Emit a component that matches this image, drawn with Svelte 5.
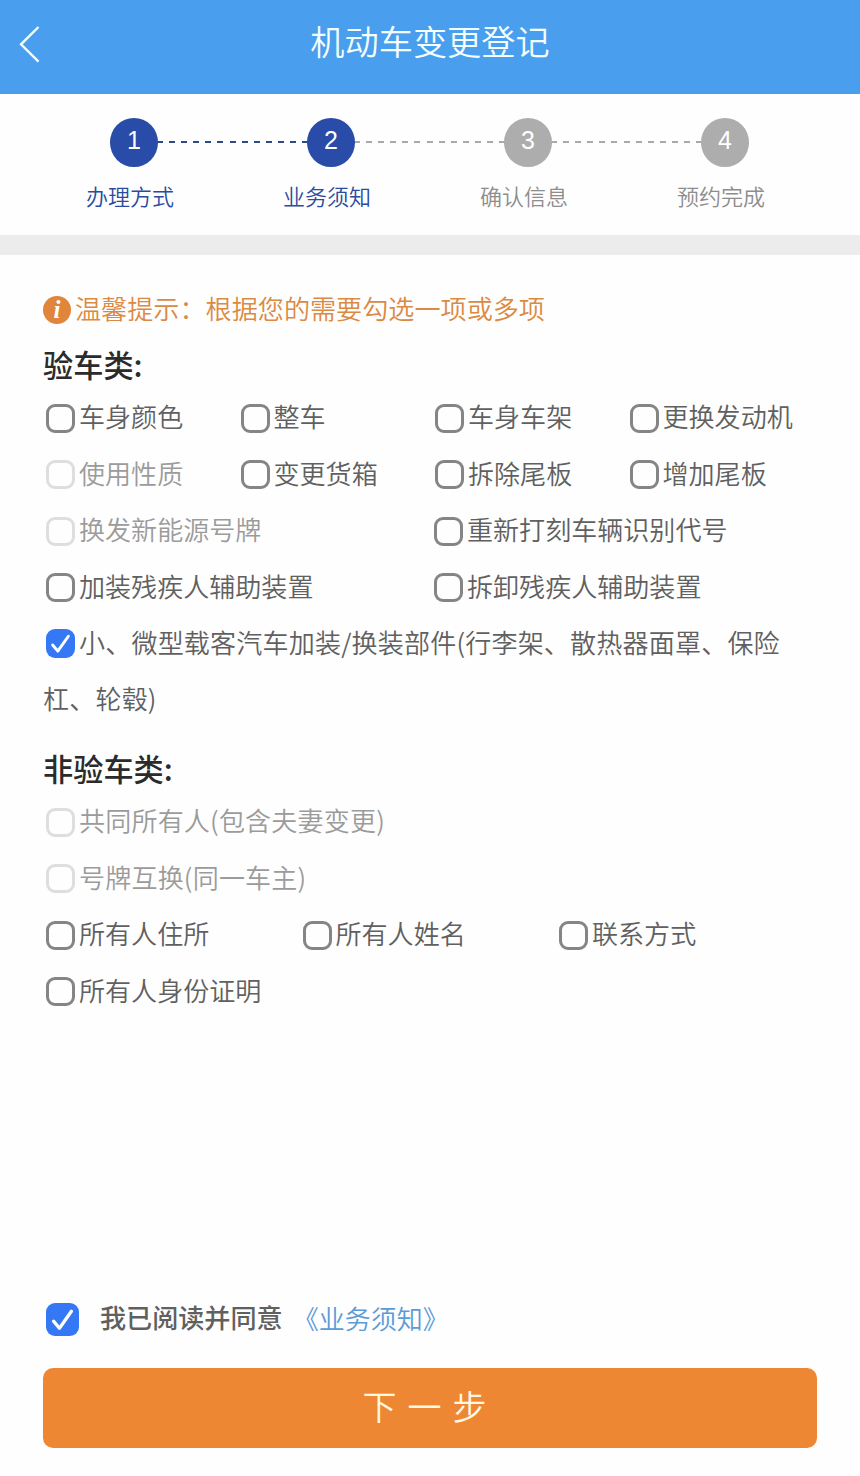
<script>
  const steps = [
    { n: 1, label: '办理方式', on: true, line: true },
    { n: 2, label: '业务须知', on: true, line: false },
    { n: 3, label: '确认信息', on: false, line: false },
    { n: 4, label: '预约完成', on: false, line: false }
  ];

  let groups = $state([
    {
      title: '验车类:',
      rows: [
        { cols: 4, items: [{ t: '车身颜色' }, { t: '整车' }, { t: '车身车架' }, { t: '更换发动机' }] },
        { cols: 4, items: [{ t: '使用性质', off: true }, { t: '变更货箱' }, { t: '拆除尾板' }, { t: '增加尾板' }] },
        { cols: 2, items: [{ t: '换发新能源号牌', off: true }, { t: '重新打刻车辆识别代号' }] },
        { cols: 2, items: [{ t: '加装残疾人辅助装置' }, { t: '拆卸残疾人辅助装置' }] },
        { cols: 1, items: [{ t: '小、微型载客汽车加装/换装部件(行李架、散热器面罩、保险杠、轮毂)', checked: true }] }
      ]
    },
    {
      title: '非验车类:',
      rows: [
        { cols: 1, items: [{ t: '共同所有人(包含夫妻变更)', off: true }] },
        { cols: 1, items: [{ t: '号牌互换(同一车主)', off: true }] },
        { cols: 3, items: [{ t: '所有人住所' }, { t: '所有人姓名' }, { t: '联系方式' }] },
        { cols: 1, items: [{ t: '所有人身份证明' }] }
      ]
    }
  ]);
  let agreed = $state(true);
</script>

{#snippet tick()}
  <svg viewBox="0 0 28 28" aria-hidden="true"><path d="M6.4 15.4 11.4 21.4 21.6 7" /></svg>
{/snippet}

<div class="page">
  <header>
    <svg class="back" viewBox="0 0 24 40"><path d="M20.5 3 3 20.3 20.5 37.6" /></svg>
    <h1>机动车变更登记</h1>
  </header>

  <ol class="steps">
    {#each steps as s}
      <li class:on={s.on} class:line={s.line}>
        <span class="track"><span class="dot">{s.n}</span></span>
        <span class="name">{s.label}</span>
      </li>
    {/each}
  </ol>

  <main>
    <p class="tip"><span class="info">i</span><span class="hint">温馨提示：根据您的需要勾选一项或多项</span></p>
    {#each groups as g}
      <section>
        <h2>{g.title}</h2>
        {#each g.rows as r}
          <div class="row c{r.cols}">
            {#each r.items as o}
              <label class:off={o.off} class:mixed={o.t.includes('(')}><input type="checkbox" bind:checked={o.checked} disabled={o.off} /><span class="box" class:checked={o.checked}>{#if o.checked}{@render tick()}{/if}</span>{o.t}</label>
            {/each}
          </div>
        {/each}
      </section>
    {/each}
  </main>

  <footer>
    <div class="agree">
      <label><input type="checkbox" bind:checked={agreed} /><span class="box big" class:checked={agreed}>{#if agreed}{@render tick()}{/if}</span><b>我已阅读并同意</b></label><span class="link">《业务须知》</span>
    </div>
    <button>下一步</button>
  </footer>
</div>

<style>
  :global(body) { background: #fefefe; }
  .page {
    display: flex;
    flex-direction: column;
    width: 860px;
    height: 1476px;
    box-sizing: border-box;
    overflow: hidden;
    background: #fefefe;
    color: #606060;
    font-family: "Noto Sans CJK SC", sans-serif;
    font-weight: 350;
  }
  header {
    display: grid;
    grid-template-columns: 60px 1fr 60px;
    height: 94px;
    flex: none;
    background: #499eee;
  }
  .back { width: 24px; height: 40px; margin: 24px 0 0 18px; }
  .back path { fill: none; stroke: #f2ffff; stroke-width: 2.4; }
  h1 {
    margin: 0;
    font-size: 34.2px;
    font-weight: 350;
    line-height: 80px;
    text-align: center;
    color: #f4ffff;
  }
  .steps {
    display: grid;
    grid-template-columns: repeat(4, 197px);
    flex: none;
    box-sizing: border-box;
    height: 161px;
    margin: 0;
    padding: 24px 0 0 35px;
    list-style: none;
    border-bottom: 20px solid #ececec;
  }
  li { display: flex; flex-direction: column; color: #8d8d8d; --line: #a9a9a9; }
  li.on { color: #2b4ba0; }
  li.line { --line: #2a4c86; }
  .track { display: flex; width: 197px; margin-left: 75px; }
  .dot {
    width: 48px;
    height: 48.5px;
    flex: none;
    border-radius: 50%;
    background: #adadad;
    color: #fff;
    font: 25px/44px "Liberation Sans", sans-serif;
    text-align: center;
  }
  li.on .dot { background: #284ca8; }
  li:not(:last-child) .track::after {
    content: "";
    flex: 1;
    height: 2px;
    margin-top: 22.5px;
    background: repeating-linear-gradient(90deg, var(--line) 0 6px, transparent 6px 12.1px);
    background-position: -1px 0;
  }
  .name { width: 190px; font-size: 22px; line-height: 32px; margin-top: 12.5px; text-align: center; }
  main { flex: 1; padding: 33px 0 0 43px; font-size: 26.05px; }
  .tip { display: flex; align-items: center; margin: 0; height: 42px; gap: 4px; color: #db8a43; }
  .hint { margin-top: -3px; font-size: 26.12px; }
  .info {
    width: 28px;
    height: 28px;
    margin-top: 2px;
    border-radius: 50%;
    background: #df863a;
    color: #fff;
    font: italic bold 25px/27px "Liberation Serif", serif;
    text-align: center;
  }
  h2 { margin: 0; font-size: 30.2px; font-weight: 500; line-height: 44px; color: #2b2b2b; padding: 12px 0 2.3px; }
  section + section h2 { padding: 19.7px 0 2px; }
  .row { display: grid; line-height: 56.4px; grid-template-columns: 750px; }
  .c4 { grid-template-columns: repeat(4, 194.5px); }
  .c2 { grid-template-columns: repeat(2, 388px); }
  .c3 { grid-template-columns: repeat(3, 256.5px); }
  .mixed { letter-spacing: 0.17px; }
  input { position: absolute; opacity: 0; width: 0; height: 0; margin: 0; }
  .box {
    display: inline-block;
    box-sizing: border-box;
    width: 29px;
    height: 29px;
    margin: 0 4px 0 3px;
    border: 3px solid #858585;
    border-radius: 9px;
    vertical-align: -5.5px;
    line-height: 0;
  }
  .off { color: #9b9b9b; }
  .off .box { border-color: #dedede; }
  .box.checked { border: 0; background: #3478f6; }
  .box svg { width: 100%; height: 100%; }
  .box path { fill: none; stroke: #fff; stroke-width: 2.8; stroke-linecap: round; stroke-linejoin: round; }
  footer { flex: none; padding: 0 43px 28px; font-size: 26px; }
  .agree { display: flex; align-items: center; height: 50px; margin-bottom: 24px; }
  .agree label { display: flex; align-items: center; }
  .box.big { width: 33px; height: 33px; margin: 1px 21px 0 3px; border-radius: 9px; }
  b { font-weight: 500; font-size: 26.1px; margin-top: -4px; }
  .link { margin: -4px 0 0 10px; color: #5b9bd8; }
  button {
    display: block;
    width: 774px;
    height: 80px;
    padding: 0 0 4px;
    border: 0;
    border-radius: 10px;
    background: #ed8733;
    color: #fff7e0;
    font: 350 34px/76px "Noto Sans CJK SC", sans-serif;
    letter-spacing: 11px;
  }
</style>
